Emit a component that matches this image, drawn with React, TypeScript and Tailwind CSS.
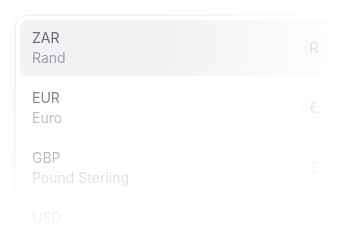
import React from "react";

const items = [
  { code: "ZAR", name: "Rand", sym: "R", active: true },
  { code: "EUR", name: "Euro", sym: "€" },
  { code: "GBP", name: "Pound Sterling", sym: "£" },
  { code: "USD", name: "US Dollar", sym: "$" },
];

export default function App() {
  return (
    <div className="w-[360px] h-[240px] overflow-hidden bg-white" style={{ fontFamily: "Inter, 'Noto Sans', sans-serif" }}>
      <div className="h-full pl-4 pr-3 pt-4 [mask-image:linear-gradient(to_bottom,black_26%,transparent_97%),linear-gradient(to_right,black_45%,transparent_100%)] [mask-composite:intersect] [-webkit-mask-composite:source-in]">
        <div className="rounded-xl bg-white p-1 shadow-[0_4px_16px_rgba(0,0,0,0.08),0_0_0_1px_rgba(0,0,0,0.04)] flex flex-col gap-1">
          {items.map((it) => (
            <div
              key={it.code}
              className={`flex items-center justify-between rounded-lg pl-3 pr-4 py-2 ${it.active ? "bg-[#f2f2f5]" : ""}`}
            >
              <div className="flex flex-col">
                <span className="text-sm leading-5 text-[#6b6b72]">{it.code}</span>
                <span className="text-sm leading-5 text-[#a3a3aa]">{it.name}</span>
              </div>
              <div className={`size-7 rounded-full flex items-center justify-center text-sm ${it.active ? "bg-[#ececf0]" : "bg-[#f2f2f4]"} text-[#8a8a92]`}>
                {it.sym}
              </div>
            </div>
          ))}
        </div>
      </div>
    </div>
  );
}
